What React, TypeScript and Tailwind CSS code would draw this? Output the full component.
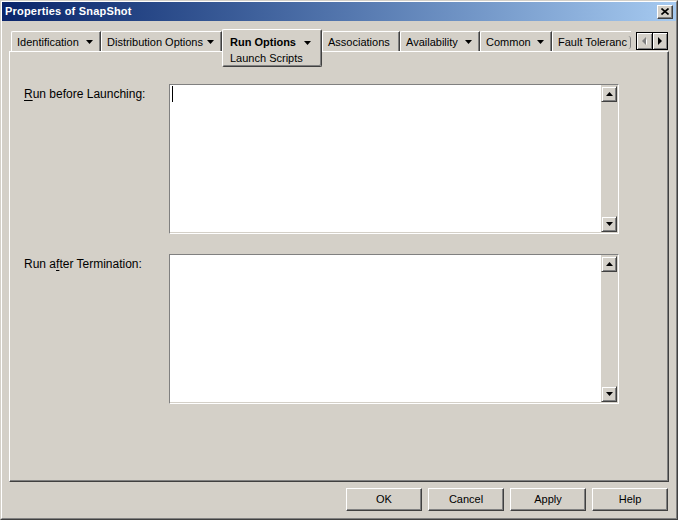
import React from "react";

const font = { fontFamily: '"Liberation Sans", Arial, sans-serif' };

function DownArrow() {
  return (
    <svg width="7" height="4" viewBox="0 0 7 4" className="block shrink-0">
      <path d="M0 0H7L3.5 4Z" fill="#000" />
    </svg>
  );
}

function Tab({
  className,
  label,
  arrow,
}: {
  className: string;
  label: string;
  arrow?: boolean;
}) {
  return (
    <div
      className={`h-[20px] flex items-center justify-between pl-[5px] pr-[7px] pt-[1px] border-t border-l border-r border-t-white border-l-white border-r-[#404040] rounded-tl-[2px] shadow-[inset_-1px_0_0_#808080] ${className}`}
    >
      <span className="text-[11px] leading-[13px] whitespace-nowrap text-black">{label}</span>
      {arrow ? <DownArrow /> : null}
    </div>
  );
}

function ScrollBtn({ up }: { up?: boolean }) {
  return (
    <div className="w-[16px] h-[16px] bg-[#d4d0c8] border border-t-[#d4d0c8] border-l-[#d4d0c8] border-r-[#404040] border-b-[#404040] shadow-[inset_1px_1px_0_#fff,inset_-1px_-1px_0_#808080] flex items-center justify-center">
      <svg width="7" height="4" viewBox="0 0 7 4" className="block">
        {up ? <path d="M3.5 0L7 4H0Z" fill="#000" /> : <path d="M0 0H7L3.5 4Z" fill="#000" />}
      </svg>
    </div>
  );
}

function TextBox({ caret }: { caret?: boolean }) {
  return (
    <div className="w-[450px] h-[150px] border border-t-[#808080] border-l-[#808080] border-r-white border-b-white">
      <div className="w-full h-full flex bg-white border-b border-r border-b-[#d4d0c8] border-r-[#d4d0c8]">
        <div className="flex-1 pl-[2px] pt-[1px]">
          {caret ? <div className="w-[1px] h-[16px] bg-black" /> : null}
        </div>
        <div className="w-[16px] h-full bg-[#d4d0c8] flex flex-col justify-between pt-[1px]">
          <ScrollBtn up />
          <ScrollBtn />
        </div>
      </div>
    </div>
  );
}

function Button({ label }: { label: string }) {
  return (
    <div className="w-[76px] h-[23px] bg-[#d4d0c8] border border-t-white border-l-white border-r-[#404040] border-b-[#404040] shadow-[inset_-1px_-1px_0_#808080] flex items-center justify-center text-[11px] text-black">
      {label}
    </div>
  );
}

export default function App() {
  return (
    <div
      style={font}
      className="w-[678px] h-[520px] bg-[#d4d0c8] border border-t-[#d4d0c8] border-l-[#d4d0c8] border-r-[#404040] border-b-[#404040] overflow-hidden"
    >
      <div className="w-full h-full flex flex-col border border-t-white border-l-white border-r-[#808080] border-b-[#808080]">
        {/* Title bar */}
        <div className="h-[19px] shrink-0 flex items-center justify-between pl-[3px] pr-[3px] bg-gradient-to-r from-[#0a246a] to-[#a6caf0]">
          <span className="text-white font-bold text-[11px] leading-[13px] tracking-[0.2px]">
            Properties of SnapShot
          </span>
          <div className="w-[16px] h-[14px] bg-[#d4d0c8] border border-t-white border-l-white border-r-[#404040] border-b-[#404040] shadow-[inset_-1px_-1px_0_#808080] flex items-center justify-center">
            <svg width="8" height="7" viewBox="0 0 8 7" className="block">
              <path d="M0.5 0.5L7.5 6.5M7.5 0.5L0.5 6.5" stroke="#000" strokeWidth="1.6" />
            </svg>
          </div>
        </div>

        <div className="h-[10px] shrink-0" />

        {/* Tabs row */}
        <div className="relative ml-[7px] w-[660px] h-[20px] shrink-0 flex items-end pl-[2px]">
          <Tab className="w-[90px]" label="Identification" arrow />
          <Tab className="w-[121px]" label="Distribution Options" arrow />
          <div className="relative w-[100px] h-[20px]">
            <div className="absolute left-0 top-[-2px] w-[100px] h-[38px] z-10 bg-[#d4d0c8] border border-t-white border-l-white border-r-[#404040] border-b-[#404040] rounded-[2px] shadow-[inset_-1px_-1px_0_#808080] pl-[7px] pr-[10px] pt-[6px]">
              <div className="flex items-center justify-between">
                <span className="text-[11px] leading-[13px] font-bold text-black">Run Options</span>
                <DownArrow />
              </div>
              <div className="text-[11px] leading-[13px] text-black mt-[3px]">Launch Scripts</div>
            </div>
          </div>
          <Tab className="w-[78px]" label="Associations" />
          <Tab className="w-[80px]" label="Availability" arrow />
          <Tab className="w-[72px]" label="Common" arrow />
          <div className="w-[79px] h-[20px] flex items-center pl-[5px] pt-[1px] border-t border-l border-t-white border-l-white rounded-tl-[2px] overflow-hidden">
            <span className="text-[11px] leading-[13px] whitespace-nowrap text-black">Fault Toleranc</span>
            <span className="ml-[1px] w-[3px] h-[13px] border-r border-[#808080] rounded-r-full shrink-0" />
          </div>
          <div className="ml-auto mr-[1px] mb-[1px] w-[32px] h-[18px] border border-black flex">
            <div className="flex-1 bg-[#d4d0c8] border-r border-black shadow-[inset_1px_1px_0_#fff,inset_-1px_-1px_0_#808080] flex items-center justify-center">
              <svg width="5" height="8" viewBox="0 0 5 8" className="block">
                <path d="M5 0V8L1 4Z" fill="#fff" transform="translate(1 1)" />
                <path d="M4 0V8L0 4Z" fill="#808080" />
              </svg>
            </div>
            <div className="flex-1 bg-[#d4d0c8] shadow-[inset_1px_1px_0_#fff,inset_-1px_-1px_0_#808080] flex items-center justify-center">
              <svg width="4" height="8" viewBox="0 0 4 8" className="block">
                <path d="M0 0V8L4 4Z" fill="#000" />
              </svg>
            </div>
          </div>
        </div>

        {/* Panel */}
        <div className="ml-[7px] w-[660px] h-[431px] shrink-0 border border-t-white border-l-white border-r-[#404040] border-b-[#404040] shadow-[inset_-1px_-1px_0_#808080] pl-[14px] pt-[32px] flex flex-col gap-[20px]">
          <div className="flex">
            <div className="w-[145px] pt-[3px] text-[12px] leading-[14px] text-black">
              <span className="underline underline-offset-[2px]">R</span>un before Launching:
            </div>
            <TextBox caret />
          </div>
          <div className="flex">
            <div className="w-[145px] pt-[3px] text-[12px] leading-[14px] text-black">
              Run a<span className="underline underline-offset-[2px]">f</span>ter Termination:
            </div>
            <TextBox />
          </div>
        </div>

        {/* Buttons */}
        <div className="ml-[7px] w-[660px] mt-[6px] flex justify-end gap-[6px] pr-[1px]">
          <Button label="OK" />
          <Button label="Cancel" />
          <Button label="Apply" />
          <Button label="Help" />
        </div>
      </div>
    </div>
  );
}
